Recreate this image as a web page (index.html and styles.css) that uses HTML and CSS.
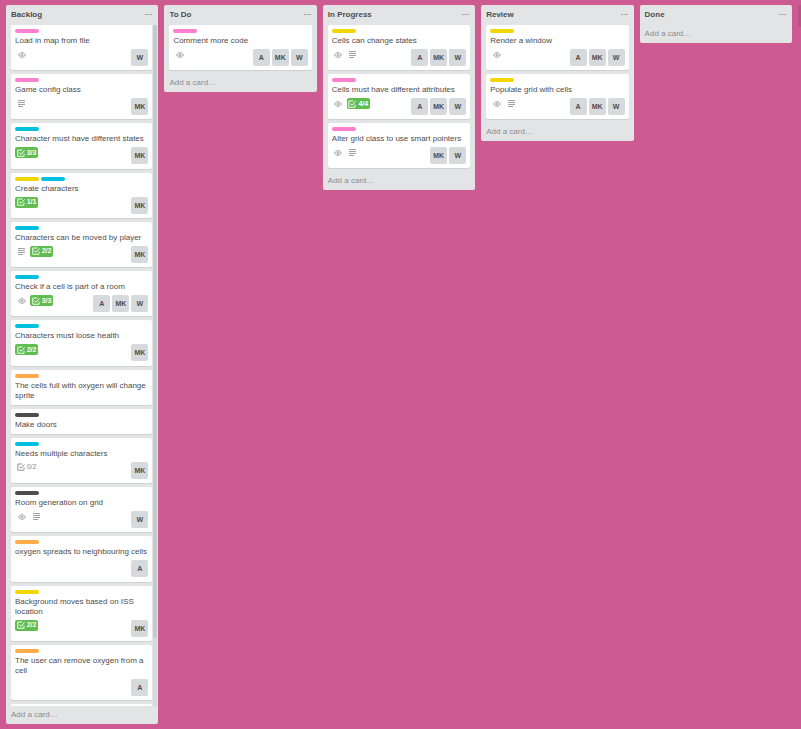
FILE: index.html
```html
<!DOCTYPE html>
<html lang="en">
<head>
<meta charset="utf-8">
<title>Board</title>
<link rel="stylesheet" href="styles.css">
</head>
<body>
<svg class="sprite" aria-hidden="true">
  <symbol id="eye" viewBox="0 0 8 6"><path d="M.5 3C1.700 1.300 2.800.7 4 .7S6.300 1.300 7.500 3C6.300 4.700 5.200 5.300 4 5.300S1.700 4.700.5 3z" fill="none" stroke="currentColor" stroke-width=".8"/><circle cx="4" cy="3" r="1" fill="none" stroke="currentColor" stroke-width=".8"/></symbol>
  <symbol id="text" viewBox="0 0 8 7"><path d="M0 .5h7M0 2.500h7M0 4.500h7M0 6.500h5" stroke="currentColor" stroke-width=".8"/></symbol>
  <symbol id="check" viewBox="0 0 16 16"><path d="M14 9v5.500H1.500V2H11" fill="none" stroke="currentColor" stroke-width="1.800"/><path d="M4.500 7l3.500 3.500L15 3" fill="none" stroke="currentColor" stroke-width="2"/></symbol>
  <symbol id="dots" viewBox="0 0 7 2"><path d="M0 0h2v1H0zM2.500 0h2v1h-2zM5 0h2v1H5z" fill="currentColor"/></symbol>
</svg>
<main class="board">
  <section class="list list-full">
    <header class="list-header"><h2>Backlog</h2><button class="menu" aria-label="Backlog menu"><svg><use href="#dots"/></svg></button></header>
    <div class="scroller">
      <ul class="cards">
        <li class="card"><div class="labels"><span class="label pink"></span></div><a class="title" href="#">Load in map from file</a><div class="meta"><div class="badges"><span class="badge"><svg class="eye"><use href="#eye"/></svg></span></div><div class="members"><span class="member">W</span></div></div></li>
        <li class="card"><div class="labels"><span class="label pink"></span></div><a class="title" href="#">Game config class</a><div class="meta"><div class="badges"><span class="badge"><svg class="text"><use href="#text"/></svg></span></div><div class="members"><span class="member">MK</span></div></div></li>
        <li class="card"><div class="labels"><span class="label sky"></span></div><a class="title" href="#">Character must have different states</a><div class="meta"><div class="badges"><span class="badge checklist done"><svg class="check"><use href="#check"/></svg>3/3</span></div><div class="members"><span class="member">MK</span></div></div></li>
        <li class="card"><div class="labels"><span class="label yellow"></span><span class="label sky"></span></div><a class="title" href="#">Create characters</a><div class="meta"><div class="badges"><span class="badge checklist done"><svg class="check"><use href="#check"/></svg>1/1</span></div><div class="members"><span class="member">MK</span></div></div></li>
        <li class="card"><div class="labels"><span class="label sky"></span></div><a class="title" href="#">Characters can be moved by player</a><div class="meta"><div class="badges"><span class="badge"><svg class="text"><use href="#text"/></svg></span><span class="badge checklist done"><svg class="check"><use href="#check"/></svg>2/2</span></div><div class="members"><span class="member">MK</span></div></div></li>
        <li class="card"><div class="labels"><span class="label sky"></span></div><a class="title" href="#">Check if a cell is part of a room</a><div class="meta"><div class="badges"><span class="badge"><svg class="eye"><use href="#eye"/></svg></span><span class="badge checklist done"><svg class="check"><use href="#check"/></svg>3/3</span></div><div class="members"><span class="member">A</span><span class="member">MK</span><span class="member">W</span></div></div></li>
        <li class="card"><div class="labels"><span class="label sky"></span></div><a class="title" href="#">Characters must loose health</a><div class="meta"><div class="badges"><span class="badge checklist done"><svg class="check"><use href="#check"/></svg>2/2</span></div><div class="members"><span class="member">MK</span></div></div></li>
        <li class="card"><div class="labels"><span class="label orange"></span></div><a class="title" href="#">The cells full with oxygen will change sprite</a></li>
        <li class="card"><div class="labels"><span class="label black"></span></div><a class="title" href="#">Make doors</a></li>
        <li class="card"><div class="labels"><span class="label sky"></span></div><a class="title" href="#">Needs multiple characters</a><div class="meta"><div class="badges"><span class="badge checklist"><svg class="check"><use href="#check"/></svg>0/2</span></div><div class="members"><span class="member">MK</span></div></div></li>
        <li class="card"><div class="labels"><span class="label black"></span></div><a class="title" href="#">Room generation on grid</a><div class="meta"><div class="badges"><span class="badge"><svg class="eye"><use href="#eye"/></svg></span><span class="badge"><svg class="text"><use href="#text"/></svg></span></div><div class="members"><span class="member">W</span></div></div></li>
        <li class="card"><div class="labels"><span class="label orange"></span></div><a class="title" href="#">oxygen spreads to neighbouring cells</a><div class="meta"><div class="badges"></div><div class="members"><span class="member">A</span></div></div></li>
        <li class="card"><div class="labels"><span class="label yellow"></span></div><a class="title" href="#">Background moves based on ISS location</a><div class="meta"><div class="badges"><span class="badge checklist done"><svg class="check"><use href="#check"/></svg>2/2</span></div><div class="members"><span class="member">MK</span></div></div></li>
        <li class="card"><div class="labels"><span class="label orange"></span></div><a class="title" href="#">The user can remove oxygen from a cell</a><div class="meta"><div class="badges"></div><div class="members"><span class="member">A</span></div></div></li>
        <li class="card card-peek"></li>
      </ul>
      <div class="track"><div class="thumb"></div></div>
    </div>
    <button class="add">Add a card…</button>
  </section>

  <section class="list">
    <header class="list-header"><h2>To Do</h2><button class="menu" aria-label="To Do menu"><svg><use href="#dots"/></svg></button></header>
    <ul class="cards">
      <li class="card"><div class="labels"><span class="label pink"></span></div><a class="title" href="#">Comment more code</a><div class="meta"><div class="badges"><span class="badge"><svg class="eye"><use href="#eye"/></svg></span></div><div class="members"><span class="member">A</span><span class="member">MK</span><span class="member">W</span></div></div></li>
    </ul>
    <button class="add">Add a card…</button>
  </section>

  <section class="list">
    <header class="list-header"><h2>In Progress</h2><button class="menu" aria-label="In Progress menu"><svg><use href="#dots"/></svg></button></header>
    <ul class="cards">
      <li class="card"><div class="labels"><span class="label yellow"></span></div><a class="title" href="#">Cells can change states</a><div class="meta"><div class="badges"><span class="badge"><svg class="eye"><use href="#eye"/></svg></span><span class="badge"><svg class="text"><use href="#text"/></svg></span></div><div class="members"><span class="member">A</span><span class="member">MK</span><span class="member">W</span></div></div></li>
      <li class="card"><div class="labels"><span class="label pink"></span></div><a class="title" href="#">Cells must have different attributes</a><div class="meta"><div class="badges"><span class="badge"><svg class="eye"><use href="#eye"/></svg></span><span class="badge checklist done"><svg class="check"><use href="#check"/></svg>4/4</span></div><div class="members"><span class="member">A</span><span class="member">MK</span><span class="member">W</span></div></div></li>
      <li class="card"><div class="labels"><span class="label pink"></span></div><a class="title" href="#">Alter grid class to use smart pointers</a><div class="meta"><div class="badges"><span class="badge"><svg class="eye"><use href="#eye"/></svg></span><span class="badge"><svg class="text"><use href="#text"/></svg></span></div><div class="members"><span class="member">MK</span><span class="member">W</span></div></div></li>
    </ul>
    <button class="add">Add a card…</button>
  </section>

  <section class="list">
    <header class="list-header"><h2>Review</h2><button class="menu" aria-label="Review menu"><svg><use href="#dots"/></svg></button></header>
    <ul class="cards">
      <li class="card"><div class="labels"><span class="label yellow"></span></div><a class="title" href="#">Render a window</a><div class="meta"><div class="badges"><span class="badge"><svg class="eye"><use href="#eye"/></svg></span></div><div class="members"><span class="member">A</span><span class="member">MK</span><span class="member">W</span></div></div></li>
      <li class="card"><div class="labels"><span class="label yellow"></span></div><a class="title" href="#">Populate grid with cells</a><div class="meta"><div class="badges"><span class="badge"><svg class="eye"><use href="#eye"/></svg></span><span class="badge"><svg class="text"><use href="#text"/></svg></span></div><div class="members"><span class="member">A</span><span class="member">MK</span><span class="member">W</span></div></div></li>
    </ul>
    <button class="add">Add a card…</button>
  </section>

  <section class="list">
    <header class="list-header"><h2>Done</h2><button class="menu" aria-label="Done menu"><svg><use href="#dots"/></svg></button></header>
    <button class="add">Add a card…</button>
  </section>

  <div class="new-list"></div>
</main>
</body>
</html>
```
FILE: styles.css
```css
* {
  box-sizing: border-box;
}

body {
  margin: 0;
  background: #cd5a91;
  color: #4d4d4d;
  font: 8px/10px "Liberation Sans", Arial, sans-serif;
}

.sprite {
  display: none;
}

svg {
  display: block;
}

button {
  margin: 0;
  padding: 0;
  border: 0;
  background: none;
  font: inherit;
  color: #8c8c8c;
  text-align: left;
  cursor: pointer;
}

.board {
  display: grid;
  grid-template-columns: repeat(5, 1fr) 3px;
  grid-template-rows: minmax(0, 1fr);
  gap: 6px;
  align-items: start;
  height: 100vh;
  padding: 5px 0 5px 6px;
  overflow: hidden;
}

.list {
  display: flex;
  flex-direction: column;
  min-width: 0;
  max-height: 100%;
  border-radius: 2px;
  background: #e2e4e6;
}

.list-full {
  height: 100%;
}

.list-header {
  display: flex;
  flex: none;
  align-items: center;
  justify-content: space-between;
  height: 20px;
  padding: 0 6px 0 5px;
}

.list-header h2 {
  margin: 0;
  font-size: 8px;
  line-height: 10px;
}

.menu {
  color: #a6a6a6;
}

.menu svg {
  width: 7px;
  height: 2px;
}

.scroller {
  display: flex;
  flex: 1;
  gap: 1px;
  min-height: 0;
  padding-right: 1px;
}

.track {
  flex: none;
  width: 4px;
  background: #d6dadc;
}

.thumb {
  height: 90%;
  border-radius: 2px;
  background: #c4c9cc;
}

.cards {
  display: flex;
  flex-direction: column;
  gap: 4px;
  margin: 0;
  padding: 0 5px 4px;
  list-style: none;
}

.scroller .cards {
  flex: 1;
  min-width: 0;
  padding: 0 0 0 5px;
  overflow: hidden;
}

.card {
  flex: 1 0 auto;
  padding: 4px;
  border-radius: 2px;
  background: #fff;
  box-shadow: 0 1px 0 #cfd2d4;
}

.card-peek {
  flex: none;
  height: 2px;
  padding: 0;
}

.labels {
  display: flex;
  gap: 2px;
  margin-bottom: 3px;
}

.label {
  width: 24px;
  height: 4px;
  border-radius: 2px;
}

.pink { background: #ff80ce; }
.sky { background: #00c2e0; }
.yellow { background: #f2d600; }
.orange { background: #ffab4a; }
.black { background: #4d4d4d; }

.title {
  display: block;
  color: #4d4d4d;
  text-decoration: none;
}

.meta {
  display: flex;
  justify-content: space-between;
  margin-top: 3px;
}

.badges,
.members {
  display: flex;
  align-items: flex-start;
  gap: 2px;
}

.badge {
  display: flex;
  align-items: center;
  justify-content: center;
  width: 13px;
  height: 11px;
  color: #8c8c8c;
}

.checklist {
  gap: 2px;
  width: 23px;
  border-radius: 2px;
  font-size: 7px;
}

.done {
  background: #61bd4f;
  color: #fff;
  font-weight: bold;
}

.eye {
  width: 8px;
  height: 6px;
}

.text {
  width: 8px;
  height: 7px;
}

.check {
  width: 8px;
  height: 8px;
}

.member {
  width: 17px;
  height: 17px;
  border-radius: 2px;
  background: #d6dadc;
  font-size: 7px;
  font-weight: bold;
  line-height: 17px;
  text-align: center;
}

.add {
  flex: none;
  height: 18px;
  padding: 0 5px;
}

.new-list {
  height: 22px;
  border-radius: 2px 0 0 2px;
  background: #b95183;
}
```
